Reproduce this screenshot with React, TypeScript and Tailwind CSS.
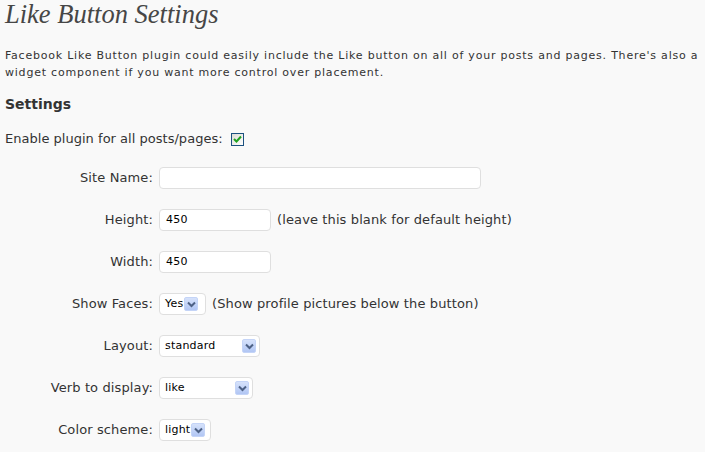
import React from "react"

const Arrow = () => (
  <span className="flex h-[14px] w-[14px] items-center justify-center rounded-[2px] bg-gradient-to-b from-[#d6e2fb] to-[#b1c6f4] border border-[#c4d4f7]">
    <svg width="9" height="7" viewBox="0 0 9 7">
      <path d="M1 1.5 L4.5 5 L8 1.5" fill="none" stroke="#4d6185" strokeWidth="2" />
    </svg>
  </span>
)

const Select = ({ value, width, tight }: { value: string; width: string; tight?: boolean }) => (
  <div
    className={`flex h-[22px] items-center rounded-[4px] border border-[#dfdfdf] bg-white pl-[5px] pr-[3px] ${width} ${
      tight ? "gap-[1px]" : "justify-between"
    }`}
  >
    <span className="text-[11px] tracking-[0.2px] text-black">{value}</span>
    <Arrow />
  </div>
)

const Row = ({ label, children }: { label: string; children: React.ReactNode }) => (
  <div className="flex h-[22px] items-center">
    <div className="w-[148px] whitespace-nowrap text-right">{label}</div>
    <div className="ml-[6px] flex items-center gap-[6px]">{children}</div>
  </div>
)

const App = () => {
  return (
    <div className="h-[452px] w-[705px] overflow-hidden bg-[#f9f9f9] pl-[5px] text-[13px] tracking-[0.12px] text-[#333] font-['DejaVu_Sans',sans-serif]">
      <h2 className="text-[26.5px] leading-[28px] italic tracking-normal text-[#464646] font-['Liberation_Serif',serif]">
        Like Button Settings
      </h2>
      <p className="mt-[19px] w-[698px] text-[11px] leading-[17px] tracking-[0.78px]">
        Facebook Like Button plugin could easily include the Like button on all of your posts and pages. There's also a
        widget component if you want more control over placement.
      </p>
      <h3 className="mt-[14px] text-[14px] font-bold leading-[18px] tracking-normal text-[#333]">Settings</h3>
      <div className="mt-[18px] flex h-[16px] items-center">
        <span className="tracking-[0.02px]">Enable plugin for all posts/pages:</span>
        <span className="ml-[8px] flex h-[13px] w-[13px] items-center justify-center border border-[#1c5180] bg-gradient-to-br from-[#dcdcd6] to-white">
          <svg width="9" height="8" viewBox="0 0 9 8">
            <path d="M1 4 L3.5 6.5 L8 1.5" fill="none" stroke="#21a121" strokeWidth="2" />
          </svg>
        </span>
      </div>
      <div className="mt-[20px] flex flex-col gap-[20px]">
        <Row label="Site Name:">
          <div className="h-[22px] w-[322px] rounded-[4px] border border-[#dfdfdf] bg-white" />
        </Row>
        <Row label="Height:">
          <div className="flex h-[22px] w-[112px] items-center rounded-[4px] border border-[#dfdfdf] bg-white pl-[6px] text-[11px] tracking-[0.2px] text-black">
            450
          </div>
          <span>(leave this blank for default height)</span>
        </Row>
        <Row label="Width:">
          <div className="flex h-[22px] w-[112px] items-center rounded-[4px] border border-[#dfdfdf] bg-white pl-[6px] text-[11px] tracking-[0.2px] text-black">
            450
          </div>
        </Row>
        <Row label="Show Faces:">
          <Select value="Yes" width="w-[47px]" tight />
          <span>(Show profile pictures below the button)</span>
        </Row>
        <Row label="Layout:">
          <Select value="standard" width="w-[101px]" />
        </Row>
        <Row label="Verb to display:">
          <Select value="like" width="w-[94px]" />
        </Row>
        <Row label="Color scheme:">
          <Select value="light" width="w-[52px]" tight />
        </Row>
      </div>
    </div>
  )
}

export default App
